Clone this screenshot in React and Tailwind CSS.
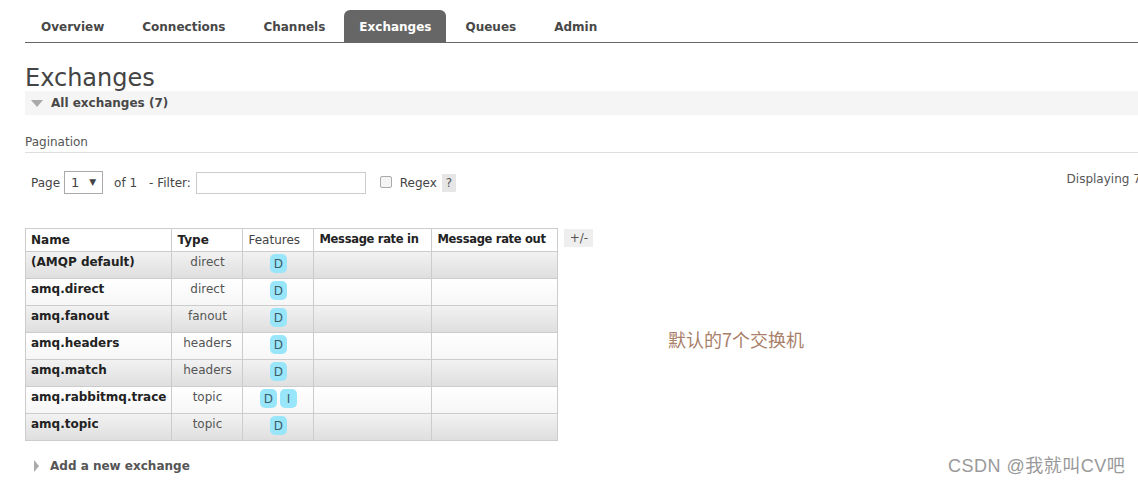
const font = { fontFamily: '"DejaVu Sans", Verdana, sans-serif' }

const tabs = ['Overview', 'Connections', 'Channels', 'Exchanges', 'Queues', 'Admin']

const rows = [
  { name: '(AMQP default)', type: 'direct', features: ['D'] },
  { name: 'amq.direct', type: 'direct', features: ['D'] },
  { name: 'amq.fanout', type: 'fanout', features: ['D'] },
  { name: 'amq.headers', type: 'headers', features: ['D'] },
  { name: 'amq.match', type: 'headers', features: ['D'] },
  { name: 'amq.rabbitmq.trace', type: 'topic', features: ['D', 'I'] },
  { name: 'amq.topic', type: 'topic', features: ['D'] },
]

function Badge({ label }) {
  return (
    <span className="inline-flex h-[19px] w-[17px] items-center justify-center rounded-[5px] bg-[#99e6fa] text-[12px] text-[#3d5a66]">
      {label}
    </span>
  )
}

export default function App() {
  return (
    <div className="relative h-[486px] w-[1138px] overflow-hidden bg-white text-[#444]" style={font}>
      {/* nav */}
      <div className="ml-[25px] mt-[10px] flex h-[33px] items-end border-b border-[#666]">
        <div className="flex h-[32px] items-stretch pl-[16px] text-[12px] font-bold text-[#484848]">
          {tabs.map((t) => (
            <div
              key={t}
              className={
                t === 'Exchanges'
                  ? 'flex items-center rounded-t-[6px] bg-[#666] px-[15px] pt-[2px] text-white'
                  : 'flex items-center px-[19px] pt-[2px] first:pl-0'
              }
            >
              {t}
            </div>
          ))}
        </div>
      </div>

      <div className="pl-[25px]">
        <h1 className="mt-[22px] text-[24px] leading-[26px] font-normal text-[#444]">Exchanges</h1>

        <div className="flex h-[24px] items-center bg-[#f5f5f5]">
          <span className="ml-[6px] mr-[8px] h-0 w-0 border-x-[6px] border-t-[7px] border-x-transparent border-t-[#aaa]" />
          <span className="text-[12px] font-bold text-[#484848]">All exchanges (7)</span>
        </div>

        <div className="mt-[18px] border-b border-[#ddd] pb-[1px] text-[12px] text-[#555]">Pagination</div>

        <div className="mt-[18px] flex items-center text-[12px] text-[#444]">
          <span className="ml-[6px]">Page</span>
          <div className="ml-[4px] flex h-[23px] w-[39px] items-center justify-between border border-[#aaa] px-[6px] text-[13px]">
            <span>1</span>
            <span className="text-[9px]">▼</span>
          </div>
          <span className="ml-[11px]">of 1</span>
          <span className="ml-[12px]">- Filter:</span>
          <div className="ml-[5px] h-[22px] w-[170px] border border-[#ccc]" />
          <span className="ml-[14px] mb-[2px] h-[12px] w-[12px] rounded-[2px] border border-[#aaa] bg-[#f4f4f4]" />
          <span className="ml-[8px]">Regex</span>
          <span className="ml-[5px] flex h-[18px] w-[14px] items-center justify-center bg-[#e6e6e6] text-[12px] text-[#555]">?</span>
          <span className="ml-auto mr-[-40px] mt-[-8px] whitespace-nowrap text-[12px] text-[#555]">Displaying 7 items</span>
        </div>

        <div className="mt-[34px] flex items-start">
          <table className="table-fixed border-collapse text-[12px] whitespace-nowrap">
            <colgroup>
              <col className="w-[145px]" />
              <col className="w-[71px]" />
              <col className="w-[71px]" />
              <col className="w-[118px]" />
              <col className="w-[126px]" />
            </colgroup>
            <thead>
              <tr className="h-[23px] text-left">
                <th className="border border-[#ccc] px-[5px] font-bold text-[#222]">Name</th>
                <th className="border border-[#ccc] px-[5px] font-bold text-[#222]">Type</th>
                <th className="border border-[#ccc] px-[5px] font-normal text-[#444]">Features</th>
                <th className="border border-[#ccc] px-[5px] text-[11.5px] tracking-[-0.3px] font-bold text-[#222]">Message rate in</th>
                <th className="border border-[#ccc] px-[5px] text-[11.5px] tracking-[-0.3px] font-bold text-[#222]">Message rate out</th>
              </tr>
            </thead>
            <tbody>
              {rows.map((r, i) => (
                <tr
                  key={r.name}
                  className={
                    i % 2 === 0
                      ? 'h-[27px] bg-gradient-to-b from-[#f2f2f2] to-[#dedede]'
                      : 'h-[27px] bg-gradient-to-b from-[#ffffff] to-[#f6f6f6]'
                  }
                >
                  <td className="border border-[#ccc] px-[5px] pt-[1px] pb-[4px] align-top font-bold text-[#222]">{r.name}</td>
                  <td className="border border-[#ccc] px-[5px] pt-[1px] pb-[4px] text-center align-top text-[#555]">{r.type}</td>
                  <td className="border border-[#ccc] px-[5px] pt-[2px] text-center align-top">
                    <div className="flex justify-center gap-[3px]">
                      {r.features.map((f) => (
                        <Badge key={f} label={f} />
                      ))}
                    </div>
                  </td>
                  <td className="border border-[#ccc]" />
                  <td className="border border-[#ccc]" />
                </tr>
              ))}
            </tbody>
          </table>
          <span className="ml-[6px] mt-[1px] flex h-[18px] w-[29px] items-center justify-center bg-[#eee] text-[12px] text-[#555]">+/-</span>
        </div>

        <div className="mt-[16px] flex items-center">
          <span className="ml-[9px] mr-[11px] h-0 w-0 border-y-[6px] border-l-[5px] border-y-transparent border-l-[#aaa]" />
          <span className="text-[12px] font-bold text-[#555]">Add a new exchange</span>
        </div>
      </div>

      <div
        className="absolute left-[668px] top-[326px] text-[18px] text-[#a98069]"
        style={{ fontFamily: '"Noto Sans CJK SC", sans-serif' }}
      >
        默认的7个交换机
      </div>
      <div
        className="absolute left-[948px] top-[453px] text-[18px] tracking-[0.5px] text-[#999]"
        style={{ fontFamily: '"Liberation Sans", "Noto Sans CJK SC", sans-serif', textShadow: '0 0 1px #fff' }}
      >
        CSDN @我就叫CV吧
      </div>
    </div>
  )
}
